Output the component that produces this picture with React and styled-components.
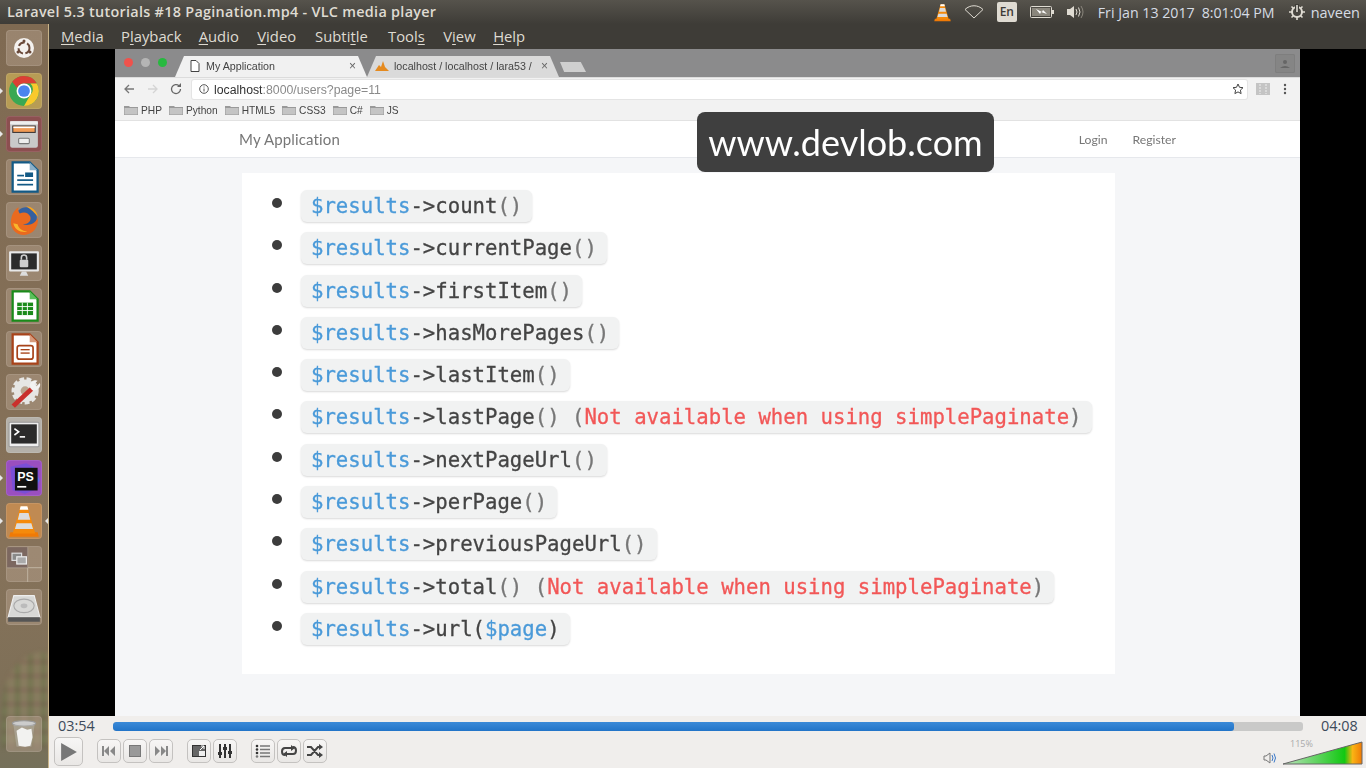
import React from "react";
import styled, { createGlobalStyle } from "styled-components";

const GlobalStyle = createGlobalStyle`
  html, body { margin: 0; padding: 0; height: 100%; overflow: hidden; background: #000; }
  #root { width: 1366px; height: 768px; }
`;

const Screen = styled.div`
  width: 1366px;
  height: 768px;
  display: flex;
  flex-direction: column;
  overflow: hidden;
  font-family: "Open Sans", sans-serif;
`;

/* ---------- ubuntu panel ---------- */
const TopBar = styled.div`
  height: 24px;
  flex: none;
  display: flex;
  align-items: center;
  justify-content: space-between;
  padding: 0 6px 0 7px;
  background: linear-gradient(#56534c, #3e3c37);
  color: #dfdbd2;
`;
const WindowTitle = styled.div`
  font-size: 14.4px;
  font-weight: 600;
  letter-spacing: 0.29px;
  white-space: nowrap;
  padding-bottom: 1px;
`;
const Tray = styled.div`
  display: flex;
  align-items: center;
  height: 24px;
`;
const TrayIcon = styled.svg`
  display: block;
  flex: none;
  margin-left: ${({ $gap }) => $gap || 0}px;
`;
const LangBox = styled.div`
  width: 20px;
  height: 20px;
  margin-left: 13px;
  border-radius: 2px;
  background: #dfdbd2;
  color: #3e3c37;
  font-size: 12px;
  font-weight: 600;
  text-align: center;
  line-height: 20px;
`;
const Clock = styled.span`
  font-size: 14.2px;
  color: #d6dce4;
  margin-left: ${({ $gap }) => $gap}px;
  white-space: nowrap;
`;
const UserName = styled(Clock)`
  font-size: 14.5px;
`;

const Body = styled.div`
  flex: 1;
  display: flex;
  min-height: 0;
`;

/* ---------- launcher ---------- */
const Launcher = styled.div`
  width: 48px;
  flex: none;
  display: flex;
  flex-direction: column;
  align-items: center;
  gap: 7px;
  padding: 6px 0 16px;
  box-sizing: content-box;
  height: 722px;
  border-right: 1px solid #c9b48a;
  position: relative;
  overflow: hidden;
  background: linear-gradient(#7f6a52 0, #86725a 70%, #7f7058 88%, #75705a 100%);

  /* the blurred plaid of the wallpaper showing through */
  &::before {
    content: "";
    position: absolute;
    left: 2px;
    top: 628px;
    width: 70px;
    height: 96px;
    border-radius: 70% 50% 0 0;
    filter: blur(2px);
    background:
      repeating-linear-gradient(90deg, rgba(90, 110, 60, 0.28) 0 5px, rgba(170, 140, 120, 0.22) 5px 13px),
      repeating-linear-gradient(0deg, rgba(100, 70, 60, 0.26) 0 4px, rgba(130, 150, 90, 0.2) 4px 14px);
  }
`;
const Tile = styled.div`
  width: 36px;
  height: 36px;
  flex: none;
  border-radius: 4px;
  background: ${({ $bg }) => $bg || "rgba(190, 170, 150, 0.42)"};
  box-shadow: inset 0 0 0 1px rgba(255, 255, 255, 0.1);
  display: flex;
  align-items: center;
  justify-content: center;
  margin-top: ${({ $push }) => ($push ? "auto" : "0")};
  position: relative;
  z-index: 1;
`;
const Pip = styled.span`
  position: absolute;
  left: -6px;
  top: 15px;
  width: 0;
  height: 0;
  border-top: 3px solid transparent;
  border-bottom: 3px solid transparent;
  border-left: 3px solid #e8e8e8;
`;
const PipRight = styled.span`
  position: absolute;
  right: -6px;
  top: 15px;
  width: 0;
  height: 0;
  border-top: 3px solid transparent;
  border-bottom: 3px solid transparent;
  border-right: 3px solid #e8e8e8;
`;

/* ---------- vlc window ---------- */
const Main = styled.div`
  flex: 1;
  min-width: 0;
  display: flex;
  flex-direction: column;
`;
const MenuBar = styled.div`
  height: 25px;
  flex: none;
  box-sizing: border-box;
  display: flex;
  align-items: center;
  padding: 0 0 2px 12px;
  background: #3e3c37;
  color: #dfdbd2;
  font-size: 14.8px;
`;
const MenuItem = styled.span`
  margin-right: ${({ $gap }) => $gap}px;
  u { text-underline-offset: 2px; text-decoration-thickness: 1px; }
`;
const VideoArea = styled.div`
  flex: 1;
  min-height: 0;
  background: #000;
  padding: 0 66px;
  display: flex;
`;
const Browser = styled.div`
  flex: 1;
  min-width: 0;
  display: flex;
  flex-direction: column;
  position: relative;
  background: #f5f6f8;
  filter: blur(0.35px);
`;

const TabStrip = styled.div`
  height: 28px;
  flex: none;
  display: flex;
  align-items: flex-end;
  padding-left: 9px;
  background: #8b8b8c;
  position: relative;
`;
const Lights = styled.div`
  display: flex;
  gap: 8px;
  align-self: flex-start;
  margin-top: 9px;
  width: 51px;
  flex: none;
`;
const Light = styled.span`
  width: 9px;
  height: 9px;
  border-radius: 50%;
  background: ${({ $c }) => $c};
`;
const Tab = styled.div`
  width: 192px;
  height: 21px;
  flex: none;
  box-sizing: border-box;
  padding: 0 11px 2px ${({ $pad }) => $pad}px;
  display: flex;
  align-items: center;
  gap: ${({ $iconGap }) => $iconGap}px;
  background: ${({ $bg }) => $bg};
  clip-path: polygon(0 100%, 9px 0, calc(100% - 9px) 0, 100% 100%);
  font-size: 10.7px;
  font-weight: 500;
  color: #444;
  font-family: "Liberation Sans", sans-serif;
  white-space: nowrap;
  overflow: hidden;
`;
const TabLabel = styled.span`
  flex: 1;
  overflow: hidden;
`;
const TabClose = styled.span`
  color: #666;
  font-size: 12px;
`;
const NewTab = styled.div`
  width: 26px;
  height: 10px;
  flex: none;
  margin: 0 0 5px 1px;
  background: #cfcfcf;
  clip-path: polygon(0 0, 80% 0, 100% 100%, 16% 100%);
`;
const ProfileBtn = styled.div`
  position: absolute;
  right: 5px;
  top: 5px;
  width: 20px;
  height: 19px;
  border-radius: 2px;
  background: #858585;
  box-shadow: inset 0 0 0 1px #7e7e7e;
  display: flex;
  align-items: center;
  justify-content: center;
`;

const Toolbar = styled.div`
  height: 23px;
  flex: none;
  display: flex;
  align-items: center;
  background: #f2f2f2;
  padding-left: 8px;
  border-top: 1px solid #dcdcdc;
  box-sizing: border-box;
`;
const NavIcon = styled.svg`
  display: block;
  flex: none;
  margin-left: ${({ $gap }) => $gap || 0}px;
`;
const UrlBox = styled.div`
  width: 1055px;
  height: 19px;
  flex: none;
  margin-left: 10px;
  box-sizing: border-box;
  background: #fff;
  border-radius: 2px;
  box-shadow: 0 0 0 1px #e4e4e4;
  display: flex;
  align-items: center;
  padding: 0 3px 0 7px;
  gap: 5px;
  font-family: "Liberation Sans", sans-serif;
  font-size: 12.3px;
  color: #8a8a8a;
`;
const UrlHost = styled.span`
  color: #333;
`;
const UrlText = styled.span`
  flex: 1;
  padding-top: 1px;
`;
const Bookmarks = styled.div`
  height: 21px;
  flex: none;
  display: flex;
  align-items: center;
  padding-left: 9px;
  gap: 7px;
  background: #f2f2f2;
  border-bottom: 1px solid #e2e2e2;
  box-sizing: border-box;
  font-family: "Liberation Sans", sans-serif;
  font-size: 10.2px;
  font-weight: 500;
  color: #444;
`;
const Bookmark = styled.div`
  display: flex;
  align-items: center;
  gap: 3px;
`;

const AppNav = styled.div`
  height: 37px;
  flex: none;
  box-sizing: border-box;
  display: flex;
  align-items: center;
  padding: 0 124px;
  background: #fff;
  border-bottom: 1px solid #e6e8ec;
  color: #777;
  font-family: Lato, sans-serif;
`;
const Brand = styled.div`
  font-size: 15px;
  flex: 1;
  letter-spacing: 0.15px;
`;
const NavLink = styled.div`
  font-size: 12.2px;
  margin-left: 25px;
`;
const Watermark = styled.div`
  position: absolute;
  left: 582px;
  top: 63px;
  width: 297px;
  height: 60px;
  box-sizing: border-box;
  border-radius: 8px;
  background: #3f3f3f;
  color: #fff;
  font-family: Lato, sans-serif;
  font-size: 36px;
  line-height: 60px;
  text-align: center;
  white-space: nowrap;
`;
const PageBody = styled.div`
  flex: 1;
  min-height: 0;
  padding: 15px 185px 42px 127px;
  display: flex;
`;
const Card = styled.ul`
  flex: 1;
  margin: 0;
  padding: 17px 0 0 30px;
  list-style: none;
  background: #fff;
  display: flex;
  flex-direction: column;
  font-family: "DejaVu Sans Mono", monospace;
  font-size: 20.65px;
  color: #444;
  -webkit-text-stroke: 0.3px;
`;
const Row = styled.li`
  height: 42.3px;
  flex: none;
  display: flex;
  align-items: flex-start;
`;
const Bullet = styled.span`
  width: 10px;
  height: 10px;
  margin: 8px 19px 0 0;
  border-radius: 50%;
  background: #3c3c3c;
  flex: none;
`;
const Pill = styled.code`
  font: inherit;
  height: 32px;
  line-height: 33px;
  padding: 0 10px;
  background: #f1f2f2;
  border-radius: 6px;
  box-shadow: 0 1px 2px #d9d9d9;
  white-space: pre;
`;
const Var = styled.span`
  color: #4a9ad9;
`;
const Muted = styled.span`
  color: #777;
`;
const Warn = styled.span`
  color: #f25757;
`;

/* ---------- player controls ---------- */
const Controls = styled.div`
  height: 52px;
  flex: none;
  background: #f0eeec;
  display: flex;
  flex-direction: column;
`;
const SeekRow = styled.div`
  height: 21px;
  flex: none;
  display: flex;
  align-items: center;
  padding: 0 8px 0 9px;
  font-size: 14.4px;
  color: #3c4a5a;
`;
const TimeLabel = styled.span`
  width: 55px;
  flex: none;
  padding-bottom: 2px;
`;
const EndLabel = styled.span`
  margin-left: 18px;
  flex: none;
  padding-bottom: 2px;
`;
const SeekTrack = styled.div`
  width: 1190px;
  height: 9px;
  flex: none;
  border-radius: 3px;
  background: #c9c9c8;
  overflow: hidden;
`;
const SeekFill = styled.div`
  height: 100%;
  border-radius: 3px;
  background: linear-gradient(#3a8ad8, #2274c8);
`;
const ButtonRow = styled.div`
  flex: 1;
  display: flex;
  align-items: flex-start;
  padding-left: 3px;
`;
const CtlBtn = styled.div`
  width: ${({ $big }) => ($big ? 29 : 24)}px;
  height: ${({ $big }) => ($big ? 29 : 24)}px;
  margin-left: ${({ $gap }) => $gap || 2}px;
  margin-top: ${({ $big }) => ($big ? 0 : 2)}px;
  flex: none;
  box-sizing: border-box;
  border: 1px solid #c4c2c0;
  border-radius: 5px;
  background: linear-gradient(#f7f6f5, #e9e7e5);
  display: flex;
  align-items: center;
  justify-content: center;
`;
const VolumeWrap = styled.div`
  margin-left: auto;
  display: flex;
  align-items: flex-end;
  height: 28px;
  margin-right: 2px;
  position: relative;
`;
const VolumeText = styled.span`
  position: absolute;
  left: 27px;
  top: 0;
  font-size: 9px;
  color: #aaa;
`;
const VolumeBar = styled.svg`
  display: block;
  margin-left: 5px;
`;

/* ---------- icons ---------- */
const Svg = ({ s = 30, children }) => (
  <svg width={s} height={s} viewBox="0 0 30 30">
    {children}
  </svg>
);

const DashIcon = () => (
  <Svg>
    <circle cx="15" cy="15" r="10" fill="#f4f1ee" />
    <circle cx="15" cy="15" r="5.5" fill="none" stroke="#6b4a3a" strokeWidth="2" strokeDasharray="7 2.5" />
    <circle cx="15" cy="8" r="1.5" fill="#6b4a3a" />
    <circle cx="9" cy="19" r="1.5" fill="#6b4a3a" />
    <circle cx="21" cy="19" r="1.5" fill="#6b4a3a" />
  </Svg>
);
const ChromeIcon = () => (
  <Svg s={32}>
    <circle cx="15" cy="15" r="14" fill="#3aa853" />
    <path d="M15 1a14 14 0 0 1 12.1 7H15a7 7 0 0 0-6.4 4.1L3.9 6.4A14 14 0 0 1 15 1z" fill="#dc3f34" />
    <path d="M27.1 8A14 14 0 0 1 15 29l6-10.500A7 7 0 0 0 21 8z" fill="#f9c92c" />
    <circle cx="15" cy="15" r="7" fill="#fff" />
    <circle cx="15" cy="15" r="5.500" fill="#4a84ee" />
  </Svg>
);
const FilesIcon = () => (
  <Svg s={32}>
    <rect x="2" y="3" width="26" height="25" rx="2" fill="#c9c9c9" />
    <rect x="2" y="3" width="26" height="3" fill="#eee" />
    <rect x="4" y="7" width="22" height="7" fill="#3a3230" />
    <rect x="5" y="8" width="20" height="5" fill="#f19a54" />
    <rect x="5" y="8" width="20" height="1.500" fill="#fff" />
    <rect x="10" y="19" width="10" height="5" rx="1" fill="#eee" stroke="#777" />
  </Svg>
);
const DocIcon = ({ main, dark, children }) => (
  <Svg s={34}>
    <path d="M5 2h15l7 7v19H5z" fill="#fff" stroke={main} strokeWidth="2" />
    <path d="M20 2l7 7h-7z" fill={dark} />
    {children}
  </Svg>
);
const FirefoxIcon = () => (
  <Svg s={32}>
    <circle cx="17" cy="13" r="10" fill="#35609f" />
    <path d="M3 14C4 8 7 5 10 3c-1 3 0 4 1 6 4-2 8-1 10 3 1 4-2 7-7 7 5 2 11 0 14-6 1 9-5 16-13 16C7 29 1 22 3 14z" fill="#ea6a1f" />
    <path d="M5 18c1 6 7 9 13 8-5-1-8-3-9-7z" fill="#f9b52c" />
    <path d="M17 2c5 0 10 4 11 10-3-4-6-7-11-10z" fill="#f4a322" />
  </Svg>
);
const LockIcon = () => (
  <Svg s={32}>
    <rect x="1" y="4" width="28" height="19" rx="1" fill="#e8e8e8" />
    <rect x="3" y="6" width="24" height="15" fill="#2c2c2c" />
    <rect x="11" y="12" width="8" height="7" rx="1" fill="#cfcfcf" />
    <path d="M12.500 12V10a2.500 2.500 0 0 1 5 0v2" fill="none" stroke="#cfcfcf" strokeWidth="1.500" />
    <path d="M11 27h8l-2-4h-4z" fill="#ddd" />
  </Svg>
);
const ToolsIcon = () => (
  <Svg s={34}>
    <circle cx="16" cy="14" r="10" fill="#e6e6e4" stroke="#e6e6e4" strokeWidth="4" strokeDasharray="4 2" />
    <circle cx="16" cy="14" r="4" fill="#b9a58f" />
    <path d="M4 26L20 11l3 3L7 29z" fill="#c9302c" />
    <path d="M20 9a5 5 0 0 1 7-4l-3 3 2 2 3-3a5 5 0 0 1-7 6z" fill="#f2f2f2" />
  </Svg>
);
const TerminalIcon = () => (
  <Svg s={32}>
    <rect x="1" y="3" width="28" height="23" rx="1" fill="#eee" stroke="#999" />
    <rect x="3" y="5" width="24" height="18" fill="#2b2b2b" />
    <path d="M6 9l4 3-4 3" fill="none" stroke="#fff" strokeWidth="1.500" />
    <rect x="11" y="16" width="5" height="1.500" fill="#fff" />
  </Svg>
);
const PhpStormIcon = () => (
  <Svg s={34}>
    <path d="M3 5l14-3 11 6 0 16-12 5L5 26z" fill="#7a4fd6" />
    <path d="M22 4l7 13-6 9z" fill="#5a6ce8" />
    <rect x="7" y="6" width="20" height="20" fill="#111" />
    <text x="9" y="18" fontFamily="Liberation Sans, sans-serif" fontSize="11" fontWeight="700" fill="#fff">PS</text>
    <rect x="9" y="22" width="8" height="1.500" fill="#fff" />
  </Svg>
);
const ConeIcon = ({ s = 34 }) => (
  <Svg s={s}>
    <path d="M3 25h24l1 4H2z" fill="#f07a06" />
    <path d="M12 2h6l7 24H5z" fill="#f58a0b" />
    <path d="M11 8h8l1.500 6H9.500zM8.500 17h13l1.500 5H7z" fill="#dcdcdc" />
    <path d="M12 2h6l.8 3h-7.600z" fill="#fff" />
  </Svg>
);
const WorkspaceIcon = () => (
  <Svg s={36}>
    <path d="M18 1v34M1 18h34" stroke="#b9ab98" strokeWidth="1" />
    <rect x="1" y="1" width="17" height="17" fill="#6e5a58" opacity="0.7" />
    <rect x="5" y="6" width="8" height="6" fill="#8a8a8a" stroke="#ddd" />
    <rect x="9" y="9" width="8" height="6" fill="#aaa" stroke="#eee" />
  </Svg>
);
const DriveIcon = () => (
  <Svg s={34}>
    <path d="M6 5h18l5 19H1z" fill="#d8d8d6" stroke="#eee" />
    <rect x="1" y="24" width="28" height="4" fill="#555" />
    <ellipse cx="15" cy="14" rx="9" ry="6" fill="none" stroke="#aaa" />
    <ellipse cx="15" cy="14" rx="3" ry="2" fill="#bbb" />
  </Svg>
);
const TrashIcon = () => (
  <Svg s={32}>
    <ellipse cx="15" cy="5" rx="11" ry="2.500" fill="#ccc" stroke="#999" />
    <path d="M5 6l3 21h14l3-21z" fill="rgba(200,200,200,.35)" />
    <path d="M8 12l5-3 5 2 4-1 1 8-2 8-5 1-6-1-1-7z" fill="#f2f2f0" />
  </Svg>
);

const Folder = () => (
  <svg width="14" height="10" viewBox="0 0 14 10">
    <path d="M0 1h5l1 1h8v8H0z" fill="#999" />
    <rect x="0.500" y="3" width="13" height="6.500" fill="#c4c4c4" />
  </svg>
);
const CtlIcon = ({ children, w = 16, h = 16 }) => (
  <svg width={w} height={h} viewBox="0 0 16 16">
    {children}
  </svg>
);

const menu = [
  ["M", "edia", 17.4],
  ["P", "layback", 17.2, "l"],
  ["A", "udio", 18.5],
  ["V", "ideo", 19],
  ["S", "ubtitle", 20.3, "t"],
  ["T", "ools", 18.5, "s"],
  ["V", "iew", 17.5, "i"],
  ["H", "elp", 0],
];

const MenuLabel = ({ first, rest, mark }) => {
  if (!mark) return <><u>{first}</u>{rest}</>;
  const i = mark === "t" ? 4 : rest.indexOf(mark);
  return <>{first}{rest.slice(0, i)}<u>{rest[i]}</u>{rest.slice(i + 1)}</>;
};

const bookmarks = ["PHP", "Python", "HTML5", "CSS3", "C#", "JS"];

const items = [
  "count", "currentPage", "firstItem", "hasMorePages", "lastItem", "lastPage",
  "nextPageUrl", "perPage", "previousPageUrl", "total", "url",
];

const Item = ({ name }) => {
  const limited = name === "lastPage" || name === "total";
  return (
    <Row>
      <Bullet />
      <Pill>
        <Var>$results</Var>-&gt;{name}
        {name === "url" ? (
          <>(<Var>$page</Var>)</>
        ) : (
          <Muted>()</Muted>
        )}
        {limited && (
          <>
            {" "}<Muted>(</Muted><Warn>Not available when using simplePaginate</Warn><Muted>)</Muted>
          </>
        )}
      </Pill>
    </Row>
  );
};

export default function App() {
  return (
    <Screen>
      <GlobalStyle />
      <TopBar>
        <WindowTitle>Laravel 5.3 tutorials #18 Pagination.mp4 - VLC media player</WindowTitle>
        <Tray>
          <ConeIcon s={19} />
          <TrayIcon $gap={12} width="20" height="14" viewBox="0 0 20 14">
            <path d="M1 4.500C6-.5 14-.5 19 4.500L10 13z" fill="none" stroke="#dfdbd2" />
          </TrayIcon>
          <LangBox>En</LangBox>
          <TrayIcon $gap={13} width="24" height="12" viewBox="0 0 24 12">
            <rect x="0.500" y="0.500" width="21" height="11" rx="1" fill="none" stroke="#dfdbd2" />
            <rect x="2" y="2" width="18" height="8" fill="#8a867c" />
            <path d="M6 3l6 3 1-2 4 4-6-2-1 2z" fill="#fff" />
            <rect x="22" y="4" width="2" height="4" fill="#dfdbd2" />
          </TrayIcon>
          <TrayIcon $gap={12} width="19" height="16" viewBox="0 0 19 16">
            <path d="M1 5h3l4-3v12l-4-3H1z" fill="#dfdbd2" />
            <path d="M10 5q2 3 0 6M12.500 3.500q3 4.500 0 9" fill="none" stroke="#dfdbd2" />
            <path d="M15 2q4 6 0 12" fill="none" stroke="#8a867c" />
          </TrayIcon>
          <Clock $gap={13}>Fri Jan 13 2017</Clock>
          <Clock $gap={7}>8:01:04 PM</Clock>
          <TrayIcon $gap={14} width="16" height="16" viewBox="0 0 16 16">
            <circle cx="8" cy="8" r="5" fill="none" stroke="#dfdbd2" strokeWidth="2" />
            <path d="M8 0v8" stroke="#3e3c37" strokeWidth="4" />
            <path d="M8 1v7M8 13v3M0 8h3M13 8h3M2.500 2.500l2 2M13.500 2.500l-2 2M2.500 13.500l2-2M13.500 13.500l-2-2" stroke="#dfdbd2" strokeWidth="1.600" />
          </TrayIcon>
          <UserName $gap={6}>naveen</UserName>
        </Tray>
      </TopBar>
      <Body>
        <Launcher>
          <Tile><DashIcon /></Tile>
          <Tile $bg="#b79c55"><Pip /><ChromeIcon /></Tile>
          <Tile $bg="#8c4f50"><Pip /><FilesIcon /></Tile>
          <Tile>
            <DocIcon main="#135a86" dark="#8cb0c8">
              <rect x="9" y="13" width="6" height="1.500" fill="#135a86" />
              <rect x="9" y="17" width="14" height="1.500" fill="#135a86" />
              <rect x="9" y="21" width="14" height="1.500" fill="#135a86" />
              <rect x="16" y="11" width="7" height="4" fill="#135a86" />
            </DocIcon>
          </Tile>
          <Tile><FirefoxIcon /></Tile>
          <Tile><LockIcon /></Tile>
          <Tile>
            <DocIcon main="#1a8a1a" dark="#5cc05c">
              <rect x="9" y="12" width="14" height="11" fill="#1a8a1a" />
              <path d="M9 15.500h14M9 19h14M13.500 12v11M18 12v11" stroke="#fff" strokeWidth="0.800" />
            </DocIcon>
          </Tile>
          <Tile>
            <DocIcon main="#a8431a" dark="#d69a7c">
              <rect x="9" y="12" width="14" height="12" rx="2" fill="none" stroke="#a8431a" strokeWidth="1.500" />
              <rect x="12" y="15" width="8" height="1.200" fill="#a8431a" />
              <rect x="12" y="18" width="8" height="1.200" fill="#a8431a" />
            </DocIcon>
          </Tile>
          <Tile><ToolsIcon /></Tile>
          <Tile $bg="#b5b1aa"><TerminalIcon /></Tile>
          <Tile $bg="#9a4fc0"><Pip /><PhpStormIcon /></Tile>
          <Tile $bg="#c08a52"><Pip /><ConeIcon /><PipRight /></Tile>
          <Tile><WorkspaceIcon /></Tile>
          <Tile><DriveIcon /></Tile>
          <Tile $push><TrashIcon /></Tile>
        </Launcher>
        <Main>
          <MenuBar>
            {menu.map(([first, rest, gap, mark]) => (
              <MenuItem key={first + rest} $gap={gap}>
                <MenuLabel first={first} rest={rest} mark={mark} />
              </MenuItem>
            ))}
          </MenuBar>
          <VideoArea>
            <Browser>
              <TabStrip>
                <Lights>
                  <Light $c="#f0524c" />
                  <Light $c="#b5b5b5" />
                  <Light $c="#27b93f" />
                </Lights>
                <Tab $pad={15} $iconGap={6} $bg="#f1f1f1">
                  <svg width="10" height="12" viewBox="0 0 10 12">
                    <path d="M1 .500h5l3 3v8H1z" fill="#fff" stroke="#444" />
                  </svg>
                  <TabLabel>My Application</TabLabel>
                  <TabClose>×</TabClose>
                </Tab>
                <Tab $pad={8} $iconGap={5} $bg="#dadada">
                  <svg width="14" height="10" viewBox="0 0 14 10">
                    <path d="M0 10l4-6 2 2 2-6 2 6 4 4z" fill="#e58a1f" />
                  </svg>
                  <TabLabel>localhost / localhost / lara53 / </TabLabel>
                  <TabClose>×</TabClose>
                </Tab>
                <NewTab />
                <ProfileBtn>
                  <svg width="10" height="10" viewBox="0 0 10 10">
                    <circle cx="5" cy="3" r="2" fill="#666" />
                    <path d="M0 9q5-4 10 0z" fill="#666" />
                  </svg>
                </ProfileBtn>
              </TabStrip>
              <Toolbar>
                <NavIcon width="12" height="12" viewBox="0 0 12 12">
                  <path d="M11 6H2M6 2L2 6l4 4" fill="none" stroke="#777" strokeWidth="1.300" />
                </NavIcon>
                <NavIcon $gap={12} width="12" height="12" viewBox="0 0 12 12">
                  <path d="M1 6h9M6 2l4 4-4 4" fill="none" stroke="#d4d4d4" strokeWidth="1.300" />
                </NavIcon>
                <NavIcon $gap={11} width="12" height="12" viewBox="0 0 12 12">
                  <path d="M10.500 6A4.500 4.500 0 1 1 9 2.700" fill="none" stroke="#666" strokeWidth="1.300" />
                  <path d="M11 0v4H7z" fill="#666" />
                </NavIcon>
                <UrlBox>
                  <svg width="10" height="10" viewBox="0 0 10 10">
                    <circle cx="5" cy="5" r="4.300" fill="none" stroke="#555" />
                    <path d="M5 4.500v3M5 2.500v1" stroke="#555" />
                  </svg>
                  <UrlText><UrlHost>localhost</UrlHost>:8000/users?page=11</UrlText>
                  <svg width="12" height="12" viewBox="0 0 12 12">
                    <path d="M6 1l1.500 3.300 3.500.4-2.600 2.400.7 3.500L6 8.900l-3.100 1.700.7-3.500L1 4.700l3.500-.4z" fill="none" stroke="#444" />
                  </svg>
                </UrlBox>
                <NavIcon $gap={9} width="14" height="12" viewBox="0 0 14 12">
                  <rect width="14" height="12" fill="#c4c4c4" />
                  <path d="M4 1v10M10 1v10" stroke="#eee" strokeDasharray="2 1" />
                </NavIcon>
                <NavIcon $gap={13} width="4" height="12" viewBox="0 0 4 12">
                  <circle cx="2" cy="2" r="1.200" fill="#555" />
                  <circle cx="2" cy="6" r="1.200" fill="#555" />
                  <circle cx="2" cy="10" r="1.200" fill="#555" />
                </NavIcon>
              </Toolbar>
              <Bookmarks>
                {bookmarks.map((b) => (
                  <Bookmark key={b}>
                    <Folder />
                    {b}
                  </Bookmark>
                ))}
              </Bookmarks>
              <AppNav>
                <Brand>My Application</Brand>
                <NavLink>Login</NavLink>
                <NavLink>Register</NavLink>
              </AppNav>
              <Watermark>www.devlob.com</Watermark>
              <PageBody>
                <Card>
                  {items.map((name) => (
                    <Item key={name} name={name} />
                  ))}
                </Card>
              </PageBody>
            </Browser>
          </VideoArea>
          <Controls>
            <SeekRow>
              <TimeLabel>03:54</TimeLabel>
              <SeekTrack>
                <SeekFill style={{ width: `${(1121 / 1190) * 100}%` }} />
              </SeekTrack>
              <EndLabel>04:08</EndLabel>
            </SeekRow>
            <ButtonRow>
              <CtlBtn $big>
                <CtlIcon w={18} h={18}><path d="M1 0l14 8-14 8z" fill="#777" /></CtlIcon>
              </CtlBtn>
              <CtlBtn $gap={14}>
                <CtlIcon><path d="M1 3h2v10H1zM8 3v10L3 8zM14 3v10L9 8z" fill="#888" /></CtlIcon>
              </CtlBtn>
              <CtlBtn>
                <CtlIcon><rect x="2.500" y="2.500" width="11" height="11" fill="#999" stroke="#777" /></CtlIcon>
              </CtlBtn>
              <CtlBtn>
                <CtlIcon><path d="M2 3l5 5-5 5zM8 3l5 5-5 5zM13 3h2v10h-2z" fill="#888" /></CtlIcon>
              </CtlBtn>
              <CtlBtn $gap={14}>
                <CtlIcon>
                  <rect x="1" y="2" width="14" height="12" fill="#333" />
                  <rect x="2" y="3" width="12" height="10" fill="#666" />
                  <rect x="8" y="8" width="6" height="5" fill="#eee" />
                  <path d="M9 7l4-4M10 3h3v3" stroke="#fff" fill="none" />
                </CtlIcon>
              </CtlBtn>
              <CtlBtn>
                <CtlIcon>
                  <path d="M3 1v14M8 1v14M13 1v14" stroke="#333" strokeWidth="2" />
                  <rect x="1" y="9" width="4" height="3" fill="#333" />
                  <rect x="6" y="4" width="4" height="3" fill="#333" />
                  <rect x="11" y="8" width="4" height="3" fill="#333" />
                </CtlIcon>
              </CtlBtn>
              <CtlBtn $gap={14}>
                <CtlIcon>
                  <path d="M5 3h10M5 6.500h10M5 10h10M5 13.500h10" stroke="#777" strokeWidth="1.500" />
                  <circle cx="2" cy="3" r="1.300" fill="#333" />
                  <circle cx="2" cy="6.500" r="1.300" fill="#333" />
                  <circle cx="2" cy="10" r="1.300" fill="#333" />
                  <circle cx="2" cy="13.500" r="1.300" fill="#777" />
                </CtlIcon>
              </CtlBtn>
              <CtlBtn>
                <CtlIcon>
                  <path d="M4 12Q1 12 1 8.500T4 5h8" fill="none" stroke="#444" strokeWidth="2" />
                  <path d="M12 4q3 0 3 3.500T12 11H4" fill="none" stroke="#444" strokeWidth="2" />
                  <path d="M10 2l4 3-4 3zM6 8l-4 3 4 3z" fill="#444" />
                </CtlIcon>
              </CtlBtn>
              <CtlBtn>
                <CtlIcon>
                  <path d="M0 4h4l7 8h2M0 12h4l7-8h2" fill="none" stroke="#444" strokeWidth="2" />
                  <path d="M12 1l4 3-4 3zM12 9l4 3-4 3z" fill="#444" />
                </CtlIcon>
              </CtlBtn>
              <VolumeWrap>
                <svg width="14" height="14" viewBox="0 0 14 14">
                  <path d="M1 5h2l4-3v10l-4-3H1z" fill="none" stroke="#777" />
                  <path d="M9 4q2 3 0 6M11 2.500q3 4.500 0 9" fill="none" stroke="#3a78c8" />
                </svg>
                <VolumeBar width="82" height="24" viewBox="0 0 82 24">
                  <defs>
                    <linearGradient id="vol" x1="0" x2="1" y1="0" y2="0">
                      <stop offset="0" stopColor="#bfe2bf" />
                      <stop offset="0.78" stopColor="#12c812" />
                      <stop offset="0.88" stopColor="#fbb414" />
                      <stop offset="1" stopColor="#f07a06" />
                    </linearGradient>
                  </defs>
                  <path d="M1 23L80 1v22z" fill="url(#vol)" stroke="#666" />
                </VolumeBar>
                <VolumeText>115%</VolumeText>
              </VolumeWrap>
            </ButtonRow>
          </Controls>
        </Main>
      </Body>
    </Screen>
  );
}
